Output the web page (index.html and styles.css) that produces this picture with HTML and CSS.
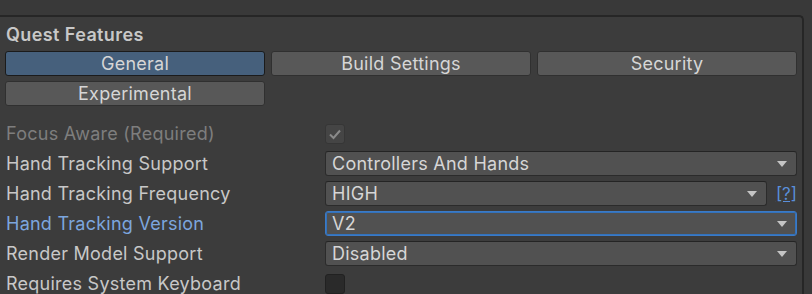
FILE: index.html
```html
<!DOCTYPE html>
<html lang="en">
<head>
    <meta charset="UTF-8">
    <title>Quest Features</title>
    <link rel="stylesheet" href="styles.css">
</head>
<body>
<div class="panel">
    <div class="title">Quest Features</div>

    <div class="tabs">
        <div class="tab active">General</div>
        <div class="tab">Build Settings</div>
        <div class="tab">Security</div>
        <div class="tab">Experimental</div>
    </div>

    <div class="fields">
        <div class="row">
            <div class="label disabled">Focus Aware (Required)</div>
            <div class="toggle checked">
                <svg width="14" height="12" viewBox="0 0 14 12"><polyline points="2,6.5 5.5,10 12,2.5" fill="none" stroke="#8a8a8a" stroke-width="2"/></svg>
            </div>
        </div>
        <div class="row">
            <div class="label">Hand Tracking Support</div>
            <div class="dropdown">Controllers And Hands<span class="arrow"></span></div>
        </div>
        <div class="row">
            <div class="label">Hand Tracking Frequency</div>
            <div class="with-help">
                <div class="dropdown">HIGH<span class="arrow"></span></div>
                <a class="help">[?]</a>
            </div>
        </div>
        <div class="row">
            <div class="label focused">Hand Tracking Version</div>
            <div class="dropdown focus">V2<span class="arrow"></span></div>
        </div>
        <div class="row">
            <div class="label">Render Model Support</div>
            <div class="dropdown">Disabled<span class="arrow"></span></div>
        </div>
        <div class="row">
            <div class="label">Requires System Keyboard</div>
            <div class="toggle"></div>
        </div>
    </div>
</div>
</body>
</html>
```

FILE: styles.css
```css
body {
    margin: 0;
    height: 100vh;
    background: #393939;
    font-family: Inter, "Noto Sans", sans-serif;
    font-size: 18px;
    letter-spacing: 0.25px;
    color: #d2d2d2;
    overflow: hidden;
}

.panel {
    margin-top: 15px;
    width: 804px;
    height: calc(100vh - 15px);
    overflow: hidden;
    background: #3c3c3c;
    border-top: 2px solid #262626;
    border-right: 2px solid #262626;
    border-top-right-radius: 5px;
    box-sizing: border-box;
    padding: 0 5px;
}

.title {
    font-weight: 600;
    letter-spacing: 0.4px;
    color: #c8c8c8;
    line-height: 20px;
    padding: 8px 0 0 1px;
    margin-bottom: 6px;
}

.tabs {
    display: grid;
    grid-template-columns: repeat(3, 1fr);
    gap: 5px 6px;
}

.tab {
    height: 25px;
    line-height: 23px;
    box-sizing: border-box;
    text-align: center;
    background: #585858;
    border: 1px solid #303030;
    border-radius: 3px;
    color: #d6d6d6;
}

.tab.active {
    background: #46607c;
    border-color: #1b1b1b;
}

.fields {
    margin-top: 15px;
    display: flex;
    flex-direction: column;
    gap: 5px;
}

.row {
    display: grid;
    grid-template-columns: 320px 1fr;
    align-items: center;
    height: 25px;
}

.label {
    padding-left: 1px;
    color: #c8c8c8;
    white-space: nowrap;
}

.label.disabled {
    color: #7e7e7e;
}

.label.focused {
    color: #7ca6de;
}

.toggle {
    width: 20px;
    height: 20px;
    box-sizing: border-box;
    background: #2a2a2a;
    border: 1px solid #212121;
    border-radius: 3px;
    display: flex;
    align-items: center;
    justify-content: center;
}

.toggle.checked {
    background: #454545;
    border-color: #363636;
}

.dropdown {
    position: relative;
    height: 25px;
    line-height: 23px;
    box-sizing: border-box;
    padding-left: 6px;
    background: #515151;
    border: 1px solid #2b2b2b;
    border-top-color: #242424;
    border-radius: 3px;
    color: #d6d6d6;
}

.dropdown.focus {
    border-color: #3b7ac6;
    box-shadow: inset 0 0 0 1px #3372bb;
}

.arrow {
    position: absolute;
    right: 9px;
    top: 9px;
    width: 0;
    height: 0;
    border-left: 5px solid transparent;
    border-right: 5px solid transparent;
    border-top: 6px solid #c4c4c4;
}

.with-help {
    display: grid;
    grid-template-columns: 1fr 30px;
    align-items: center;
}

.help {
    justify-self: end;
    color: #5a8fdb;
    text-decoration: underline;
    font-size: 17px;
    letter-spacing: 0;
}
```
